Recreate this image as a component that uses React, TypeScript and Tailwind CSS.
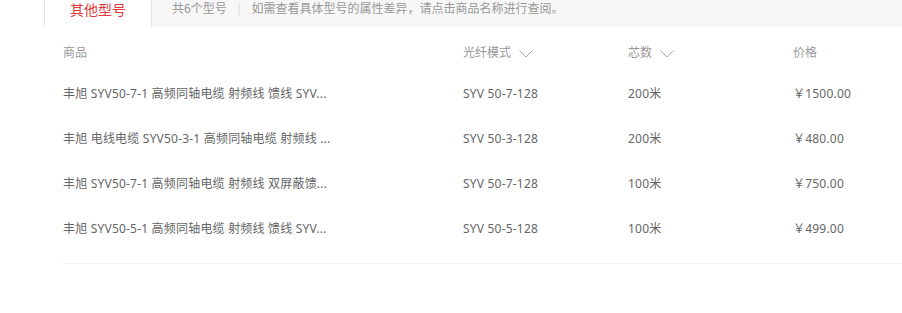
import { ReactNode } from 'react';

interface ModelRow {
  name: string;
  mode: string;
  cores: string;
  price: string;
}

const rows: ModelRow[] = [
  { name: '丰旭 SYV50-7-1 高频同轴电缆 射频线 馈线 SYV...', mode: 'SYV 50-7-128', cores: '200米', price: '1500.00' },
  { name: '丰旭 电线电缆 SYV50-3-1 高频同轴电缆 射频线 ...', mode: 'SYV 50-3-128', cores: '200米', price: '480.00' },
  { name: '丰旭 SYV50-7-1 高频同轴电缆 射频线 双屏蔽馈...', mode: 'SYV 50-7-128', cores: '100米', price: '750.00' },
  { name: '丰旭 SYV50-5-1 高频同轴电缆 射频线 馈线 SYV...', mode: 'SYV 50-5-128', cores: '100米', price: '499.00' },
];

function Chevron() {
  return (
    <svg width="14" height="8" viewBox="0 0 14 8" className="ml-[8px] mt-[1px]">
      <polyline points="0.5,0.5 7,7 13.5,0.5" fill="none" stroke="#aaa" strokeWidth="1" />
    </svg>
  );
}

function Cell({ w, children }: { w?: string; children: ReactNode }) {
  return <div className={`${w ?? 'flex-1'} flex items-center`}>{children}</div>;
}

export default function App() {
  return (
    <div
      className="min-h-screen bg-white text-[12px]"
      style={{ fontFamily: '"Noto Sans", "Noto Sans CJK SC", sans-serif' }}
    >
      {/* tab bar */}
      <div className="ml-[44px] flex h-[27px] items-start bg-[#f7f7f7]">
        <div className="flex h-full w-[108px] justify-center border-l border-r border-[#e6e6e6] bg-white">
          <span className="text-[14px] leading-[20px] text-[#e4393c]">其他型号</span>
        </div>
        <div className="flex items-center pl-[20px] leading-[18px] text-[#999]">
          <span>共6个型号</span>
          <span className="mx-[9px] text-[#ddd]">|</span>
          <span>如需查看具体型号的属性差异，请点击商品名称进行查阅。</span>
        </div>
      </div>

      {/* table */}
      <div className="ml-[63px] mt-[8px]">
        <div className="flex h-[36px] text-[#999]">
          <Cell w="w-[400px]">商品</Cell>
          <Cell w="w-[165px]">
            光纤模式
            <Chevron />
          </Cell>
          <Cell w="w-[165px]">
            芯数
            <Chevron />
          </Cell>
          <Cell>价格</Cell>
        </div>

        {rows.map((r, i) => (
          <div key={i} className="flex h-[45px] tracking-[0.2px] text-[#666]">
            <Cell w="w-[400px]">
              <span className="cursor-pointer hover:text-[#e4393c]">{r.name}</span>
            </Cell>
            <Cell w="w-[165px]">{r.mode}</Cell>
            <Cell w="w-[165px]">{r.cores}</Cell>
            <Cell>￥{r.price}</Cell>
          </div>
        ))}

        <div className="h-[13px] border-b border-[#eee]" />
      </div>
    </div>
  );
}
